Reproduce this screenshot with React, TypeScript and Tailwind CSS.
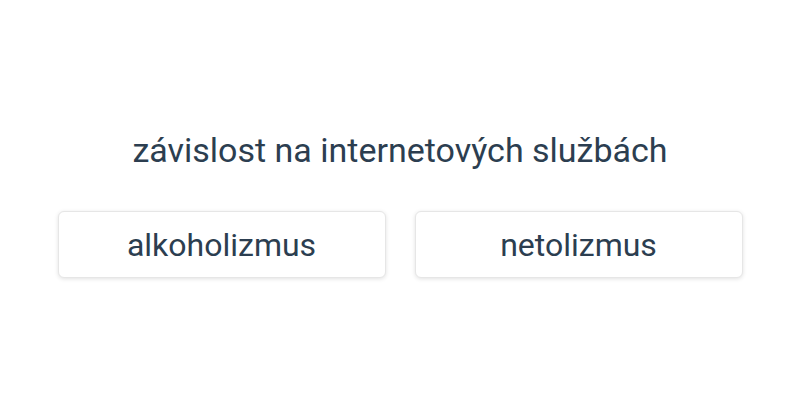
export default function App() {
  const options = ['alkoholizmus', 'netolizmus'];

  return (
    <div className="w-[800px] h-[400px] bg-white flex flex-col items-center pt-[128px] text-[#2c3e50] font-['Roboto',sans-serif]">
      <h1 className="text-[34px] leading-[44px] font-normal">závislost na internetových službách</h1>
      <div className="flex gap-[29px] mt-[39px]">
        {options.map((o) => (
          <button
            key={o}
            className="w-[328px] h-[67px] bg-white border border-[#e6e6e6] rounded-[6px] shadow-[0_1px_4px_rgba(0,0,0,0.12)] text-[32px] leading-none text-[#2c3e50]"
          >
            {o}
          </button>
        ))}
      </div>
    </div>
  );
}
